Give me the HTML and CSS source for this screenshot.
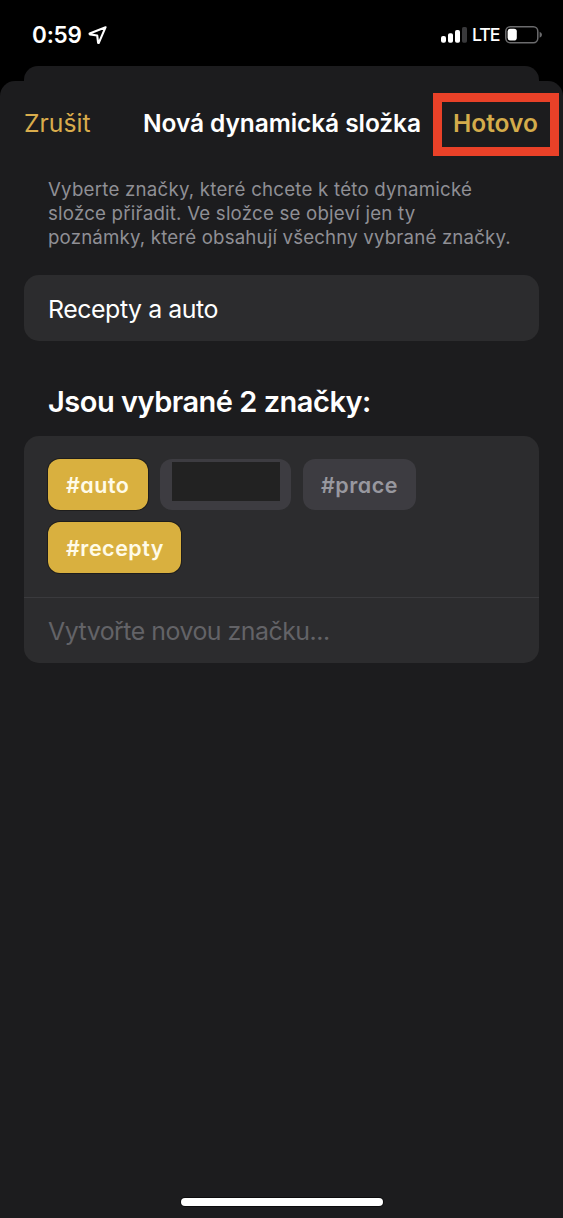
FILE: index.html
```html
<!DOCTYPE html>
<html lang="cs">
<head>
<meta charset="utf-8">
<title>Nová dynamická složka</title>
<link rel="stylesheet" href="styles.css">
</head>
<body>
<div class="phone">
  <header class="status">
    <div class="status-left">
      <span class="clock">0:59</span>
      <svg class="location" width="20" height="20" viewBox="0 0 20 20"><path d="M17.6 2.2 1.7 8.5q-.5.6.3.9l7.2 1.1.9 7.2q.4.7.8 0z" fill="none" stroke="#fff" stroke-width="2.1" stroke-linejoin="round"/></svg>
    </div>
    <div class="status-right">
      <svg class="signal" width="27" height="18" viewBox="0 0 27 18"><g fill="#fff"><rect x="0" y="10" width="5" height="6.7" rx="2"/><rect x="7" y="7.3" width="5" height="9.4" rx="1.8"/><rect x="14" y="4" width="5" height="12.7" rx="1.8"/></g><rect x="21" y="1" width="5" height="15.7" rx="1.6" fill="#39393b"/></svg>
      <span class="network">LTE</span>
      <svg class="battery" width="38" height="18" viewBox="0 0 38 18"><rect x=".8" y=".8" width="32" height="15.9" rx="4.4" fill="none" stroke="#6b6b6d" stroke-width="1.5"/><rect x="2.6" y="2.8" width="9.2" height="11.8" rx="2.8" fill="#fff"/><path d="M34.6 5.8q2.4.8 2.4 3t-2.4 3z" fill="#6b6b6d"/></svg>
    </div>
  </header>
  <div class="sheet-behind"></div>
  <main class="sheet">
    <nav class="navbar">
      <span class="cancel">Zrušit</span>
      <h1 class="title">Nová dynamická složka</h1>
      <span class="done-frame"><span class="done">Hotovo</span></span>
    </nav>
    <p class="description"><span class="line l1">Vyberte značky, které chcete k této dynamické</span><span class="line l2">složce přiřadit. Ve složce se objeví jen ty</span><span class="line l3">poznámky, které obsahují všechny vybrané značky.</span></p>
    <div class="name-field"><span class="name-text">Recepty a auto</span></div>
    <h2 class="heading"><span>Jsou vybrané 2 značky:</span></h2>
    <section class="tag-card">
      <div class="tags">
        <span class="tag selected auto"><span>#auto</span></span>
        <span class="tag hidden-tag"><span class="redaction"></span></span>
        <span class="tag prace"><span>#prace</span></span>
        <span class="tag selected recepty"><span>#recepty</span></span>
      </div>
      <div class="new-tag"><span class="placeholder">Vytvořte novou značku...</span></div>
    </section>
    <div class="home-indicator"></div>
  </main>
</div>
</body>
</html>
```
FILE: styles.css
```css
* { box-sizing: border-box; margin: 0; }
body { background: #000; font-family: Inter, "Liberation Sans", sans-serif; color: #fff; }
svg { display: block; }
.phone { width: 563px; height: 1218px; display: flex; flex-direction: column; background: #000; overflow: hidden; white-space: nowrap; }
.status { height: 66px; padding: 0 20px 0 32px; display: flex; justify-content: space-between; align-items: flex-start; }
.status-left { display: flex; padding-top: 21px; }
.clock { font-size: 22.5px; line-height: 28px; font-weight: 600; width: 56px; letter-spacing: -0.2px; }
.location { margin-top: 4px; }
.status-right { display: flex; padding-top: 26px; }
.signal { margin-right: 4px; }
.network { width: 33px; font-size: 17.8px; line-height: 18px; font-weight: 500; letter-spacing: -1.1px; }
.sheet-behind { height: 15px; margin: 0 24px; border-radius: 14px 14px 0 0; background: #1c1c1e; flex: none; }
.sheet { flex: 1; display: flex; flex-direction: column; background: #1c1c1e; border-radius: 15px 15px 0 0; padding: 11px 24px 12px; }
.navbar { height: 64px; margin-right: -20px; display: flex; align-items: center; }
.cancel { width: 119px; font-size: 24.7px; color: #d9ac4c; padding-bottom: 2px; }
.title { width: 290px; font-size: 24.5px; font-weight: 600; letter-spacing: -0.08px; padding-bottom: 2px; }
.done-frame { width: 126px; height: 63px; border: 9px solid #e94128; display: flex; align-items: center; padding-left: 11px; }
.done { font-size: 24.5px; font-weight: 600; color: #d4ac4b; padding-bottom: 2px; }
.description { margin: 22px 24px 0; font-size: 18.7px; line-height: 24px; color: #8f8f95; }
.line { display: block; }
.l1 { letter-spacing: 0.22px; }
.l2 { letter-spacing: 0.2px; }
.l3 { letter-spacing: 0.16px; }
.name-field { height: 66px; margin-top: 25px; padding: 1px 0 0 24px; border-radius: 15px; background: #2c2c2e; display: flex; align-items: center; font-size: 24.9px; letter-spacing: -0.45px; }
.heading { height: 95px; padding: 43px 0 0 24px; font-size: 29px; line-height: 36px; font-weight: 600; letter-spacing: -0.5px; }
.tag-card { height: 227px; border-radius: 15px; background: #2c2c2e; }
.tags { height: 162px; padding: 23.4px 24px 24px; display: flex; flex-wrap: wrap; gap: 12px; align-content: flex-start; border-bottom: 1px solid #3a3a3d; }
.tag { height: 51px; padding-left: 18px; border-radius: 12px; background: #3d3c41; color: #98989f; font-size: 21.5px; font-weight: 600; font-feature-settings: "cv11"; letter-spacing: 0.5px; display: flex; align-items: center; }
.selected { background: #d9b03f; color: #fffbe8; box-shadow: 0 0 0 1px #1e1d1c; }
.auto { width: 100px; }
.hidden-tag { width: 131px; padding: 3px 11px 9px 12px; align-items: stretch; }
.redaction { flex: 1; background: #222; }
.prace { width: 113px; }
.recepty { width: 133px; }
.new-tag { height: 65px; padding: 1px 0 0 24px; display: flex; align-items: center; font-size: 24.9px; letter-spacing: -0.5px; color: #636367; }
.home-indicator { width: 202px; height: 8px; margin: auto auto 0; border-radius: 4px; background: #fff; box-shadow: 0 0 0 1px #0c0c0d; }
```
